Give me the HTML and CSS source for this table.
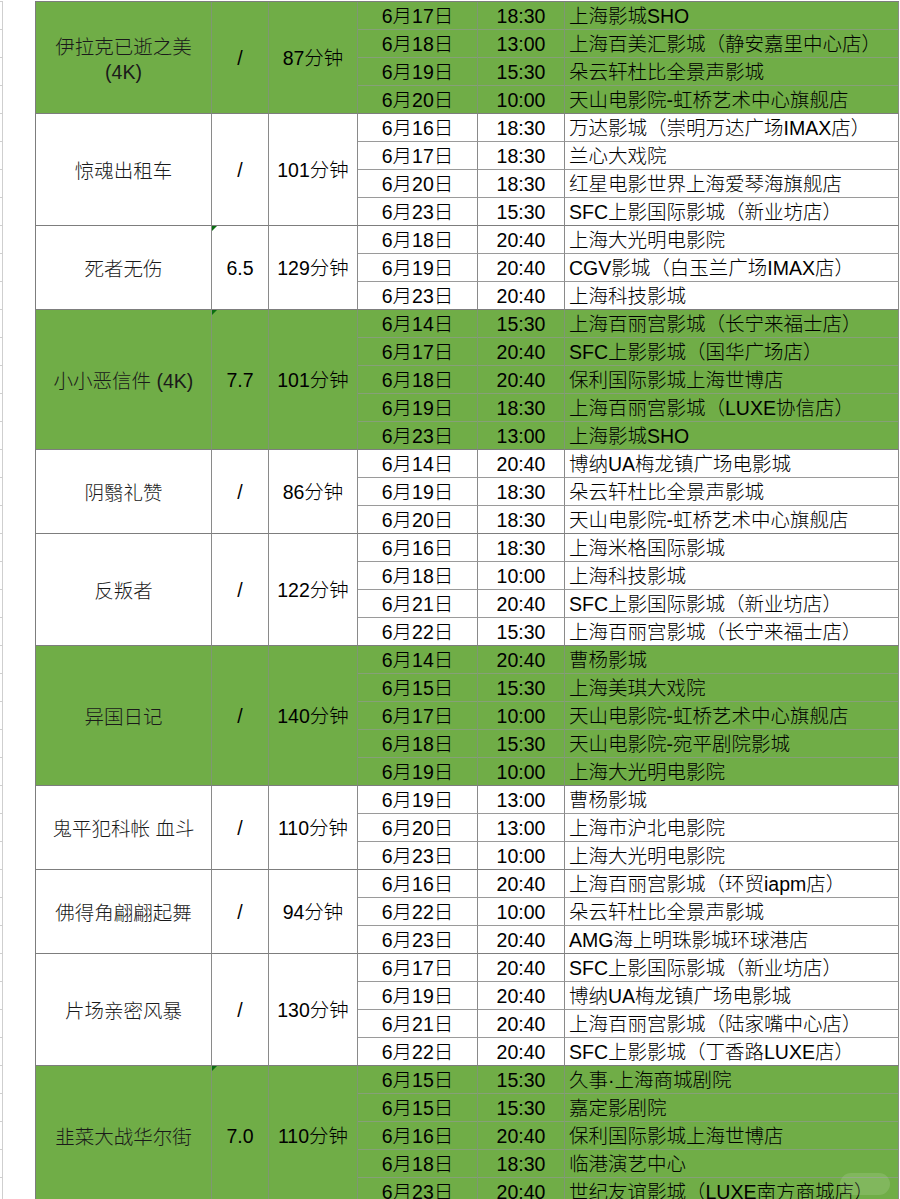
FILE: index.html
```html
<!DOCTYPE html>
<html lang="zh-CN">
<head>
<meta charset="utf-8">
<title>放映排期</title>
<link rel="stylesheet" href="styles.css">
</head>
<body>
<div class="sheet">
  <div class="gutter"></div>
  <table class="grid">
    <colgroup>
      <col class="c-name"><col class="c-rate"><col class="c-dur"><col class="c-date"><col class="c-time"><col class="c-cine">
    </colgroup>
    <tbody class="green">
      <tr><td class="name" rowspan="4">伊拉克已逝之美 (4K)</td><td class="rate" rowspan="4">/</td><td class="dur" rowspan="4">87分钟</td><td class="date">6月17日</td><td class="time">18:30</td><td class="cine">上海影城SHO</td></tr>
      <tr><td class="date">6月18日</td><td class="time">13:00</td><td class="cine">上海百美汇影城（静安嘉里中心店）</td></tr>
      <tr><td class="date">6月19日</td><td class="time">15:30</td><td class="cine">朵云轩杜比全景声影城</td></tr>
      <tr class="last"><td class="date">6月20日</td><td class="time">10:00</td><td class="cine">天山电影院-虹桥艺术中心旗舰店</td></tr>
    </tbody>
    <tbody class="white">
      <tr><td class="name" rowspan="4">惊魂出租车</td><td class="rate" rowspan="4">/</td><td class="dur" rowspan="4">101分钟</td><td class="date">6月16日</td><td class="time">18:30</td><td class="cine">万达影城（崇明万达广场IMAX店）</td></tr>
      <tr><td class="date">6月17日</td><td class="time">18:30</td><td class="cine">兰心大戏院</td></tr>
      <tr><td class="date">6月20日</td><td class="time">18:30</td><td class="cine">红星电影世界上海爱琴海旗舰店</td></tr>
      <tr class="last"><td class="date">6月23日</td><td class="time">15:30</td><td class="cine">SFC上影国际影城（新业坊店）</td></tr>
    </tbody>
    <tbody class="white">
      <tr><td class="name" rowspan="3">死者无伤</td><td class="rate" rowspan="3"><span class="flag"></span>6.5</td><td class="dur" rowspan="3">129分钟</td><td class="date">6月18日</td><td class="time">20:40</td><td class="cine">上海大光明电影院</td></tr>
      <tr><td class="date">6月19日</td><td class="time">20:40</td><td class="cine">CGV影城（白玉兰广场IMAX店）</td></tr>
      <tr class="last"><td class="date">6月23日</td><td class="time">20:40</td><td class="cine">上海科技影城</td></tr>
    </tbody>
    <tbody class="green">
      <tr><td class="name" rowspan="5">小小恶信件 (4K)</td><td class="rate" rowspan="5"><span class="flag"></span>7.7</td><td class="dur" rowspan="5">101分钟</td><td class="date">6月14日</td><td class="time">15:30</td><td class="cine">上海百丽宫影城（长宁来福士店）</td></tr>
      <tr><td class="date">6月17日</td><td class="time">20:40</td><td class="cine">SFC上影影城（国华广场店）</td></tr>
      <tr><td class="date">6月18日</td><td class="time">20:40</td><td class="cine">保利国际影城上海世博店</td></tr>
      <tr><td class="date">6月19日</td><td class="time">18:30</td><td class="cine">上海百丽宫影城（LUXE协信店）</td></tr>
      <tr class="last"><td class="date">6月23日</td><td class="time">13:00</td><td class="cine">上海影城SHO</td></tr>
    </tbody>
    <tbody class="white">
      <tr><td class="name" rowspan="3">阴翳礼赞</td><td class="rate" rowspan="3">/</td><td class="dur" rowspan="3">86分钟</td><td class="date">6月14日</td><td class="time">20:40</td><td class="cine">博纳UA梅龙镇广场电影城</td></tr>
      <tr><td class="date">6月19日</td><td class="time">18:30</td><td class="cine">朵云轩杜比全景声影城</td></tr>
      <tr class="last"><td class="date">6月20日</td><td class="time">18:30</td><td class="cine">天山电影院-虹桥艺术中心旗舰店</td></tr>
    </tbody>
    <tbody class="white">
      <tr><td class="name" rowspan="4">反叛者</td><td class="rate" rowspan="4">/</td><td class="dur" rowspan="4">122分钟</td><td class="date">6月16日</td><td class="time">18:30</td><td class="cine">上海米格国际影城</td></tr>
      <tr><td class="date">6月18日</td><td class="time">10:00</td><td class="cine">上海科技影城</td></tr>
      <tr><td class="date">6月21日</td><td class="time">20:40</td><td class="cine">SFC上影国际影城（新业坊店）</td></tr>
      <tr class="last"><td class="date">6月22日</td><td class="time">15:30</td><td class="cine">上海百丽宫影城（长宁来福士店）</td></tr>
    </tbody>
    <tbody class="green">
      <tr><td class="name" rowspan="5">异国日记</td><td class="rate" rowspan="5">/</td><td class="dur" rowspan="5">140分钟</td><td class="date">6月14日</td><td class="time">20:40</td><td class="cine">曹杨影城</td></tr>
      <tr><td class="date">6月15日</td><td class="time">15:30</td><td class="cine">上海美琪大戏院</td></tr>
      <tr><td class="date">6月17日</td><td class="time">10:00</td><td class="cine">天山电影院-虹桥艺术中心旗舰店</td></tr>
      <tr><td class="date">6月18日</td><td class="time">15:30</td><td class="cine">天山电影院-宛平剧院影城</td></tr>
      <tr class="last"><td class="date">6月19日</td><td class="time">10:00</td><td class="cine">上海大光明电影院</td></tr>
    </tbody>
    <tbody class="white">
      <tr><td class="name" rowspan="3">鬼平犯科帐 血斗</td><td class="rate" rowspan="3">/</td><td class="dur" rowspan="3">110分钟</td><td class="date">6月19日</td><td class="time">13:00</td><td class="cine">曹杨影城</td></tr>
      <tr><td class="date">6月20日</td><td class="time">13:00</td><td class="cine">上海市沪北电影院</td></tr>
      <tr class="last"><td class="date">6月23日</td><td class="time">10:00</td><td class="cine">上海大光明电影院</td></tr>
    </tbody>
    <tbody class="white">
      <tr><td class="name" rowspan="3">佛得角翩翩起舞</td><td class="rate" rowspan="3">/</td><td class="dur" rowspan="3">94分钟</td><td class="date">6月16日</td><td class="time">20:40</td><td class="cine">上海百丽宫影城（环贸iapm店）</td></tr>
      <tr><td class="date">6月22日</td><td class="time">10:00</td><td class="cine">朵云轩杜比全景声影城</td></tr>
      <tr class="last"><td class="date">6月23日</td><td class="time">20:40</td><td class="cine">AMG海上明珠影城环球港店</td></tr>
    </tbody>
    <tbody class="white">
      <tr><td class="name" rowspan="4">片场亲密风暴</td><td class="rate" rowspan="4">/</td><td class="dur" rowspan="4">130分钟</td><td class="date">6月17日</td><td class="time">20:40</td><td class="cine">SFC上影国际影城（新业坊店）</td></tr>
      <tr><td class="date">6月19日</td><td class="time">20:40</td><td class="cine">博纳UA梅龙镇广场电影城</td></tr>
      <tr><td class="date">6月21日</td><td class="time">20:40</td><td class="cine">上海百丽宫影城（陆家嘴中心店）</td></tr>
      <tr class="last"><td class="date">6月22日</td><td class="time">20:40</td><td class="cine">SFC上影影城（丁香路LUXE店）</td></tr>
    </tbody>
    <tbody class="green">
      <tr><td class="name" rowspan="5">韭菜大战华尔街</td><td class="rate" rowspan="5"><span class="flag"></span>7.0</td><td class="dur" rowspan="5">110分钟</td><td class="date">6月15日</td><td class="time">15:30</td><td class="cine">久事·上海商城剧院</td></tr>
      <tr><td class="date">6月15日</td><td class="time">15:30</td><td class="cine">嘉定影剧院</td></tr>
      <tr><td class="date">6月16日</td><td class="time">20:40</td><td class="cine">保利国际影城上海世博店</td></tr>
      <tr><td class="date">6月18日</td><td class="time">18:30</td><td class="cine">临港演艺中心</td></tr>
      <tr class="last"><td class="date">6月23日</td><td class="time">20:40</td><td class="cine">世纪友谊影城（LUXE南方商城店）</td></tr>
    </tbody>
  </table>
</div>
<div class="mark"></div>
</body>
</html>
```
FILE: styles.css
```css
html, body {
  margin: 0;
  padding: 0;
  background: #ffffff;
  overflow: hidden;
}

body {
  font-family: "Liberation Sans", "Noto Sans CJK SC", sans-serif;
  font-size: 19.5px;
  font-weight: 300;
  color: #000000;
}

.sheet {
  display: flex;
  align-items: flex-start;
  padding-top: 1px;
  height: 1300px;
}

.gutter {
  width: 2px;
  height: 1300px;
  border-right: 1px solid #cfcfcf;
  background: repeating-linear-gradient(to bottom, #cfcfcf 0, #cfcfcf 1px, transparent 1px, transparent 28px);
  margin-right: 32px;
  flex: none;
}

.grid {
  border-collapse: separate;
  border-spacing: 0;
  table-layout: fixed;
  width: 864px;
  border-top: 1px solid #7d7d7d;
  border-left: 1px solid #7d7d7d;
  flex: none;
}

.c-name { width: 176px; }
.c-rate { width: 57px; }
.c-dur { width: 89px; }
.c-date { width: 120px; }
.c-time { width: 87px; }
.c-cine { width: 334px; }

.grid td {
  padding: 2px 0 0 0;
  height: 25px;
  line-height: 25px;
  border-right: 1px solid #8a8a8a;
  border-bottom: 1px solid #9a9a9a;
  white-space: nowrap;
  overflow: hidden;
  vertical-align: middle;
}

.green td {
  background: #70ad47;
  border-right-color: #7f9773;
  border-bottom-color: #86a078;
}

.grid tr.last td,
.grid td.name,
.grid td.rate,
.grid td.dur {
  border-bottom-color: #7d7d7d;
}

.grid td.name {
  text-align: center;
  white-space: normal;
  line-height: 25px;
  padding: 4px 6px 0 6px;
  color: #1a1a1a;
}

.grid td.rate {
  text-align: center;
  position: relative;
  overflow: visible;
}

.grid td.dur {
  text-align: center;
}

.grid td.date {
  text-align: center;
}

.grid td.time {
  text-align: center;
}

.grid td.cine {
  text-align: left;
  padding-left: 4px;
  border-right-color: #8a8a8a;
}

.flag {
  position: absolute;
  left: 0;
  top: 0;
  width: 0;
  height: 0;
  border-top: 5px solid #0b6e12;
  border-right: 5px solid transparent;
}

.mark {
  position: fixed;
  right: 10px;
  bottom: 4px;
  width: 50px;
  height: 22px;
  border-radius: 12px;
  background: rgba(255, 255, 255, 0.12);
}
```
